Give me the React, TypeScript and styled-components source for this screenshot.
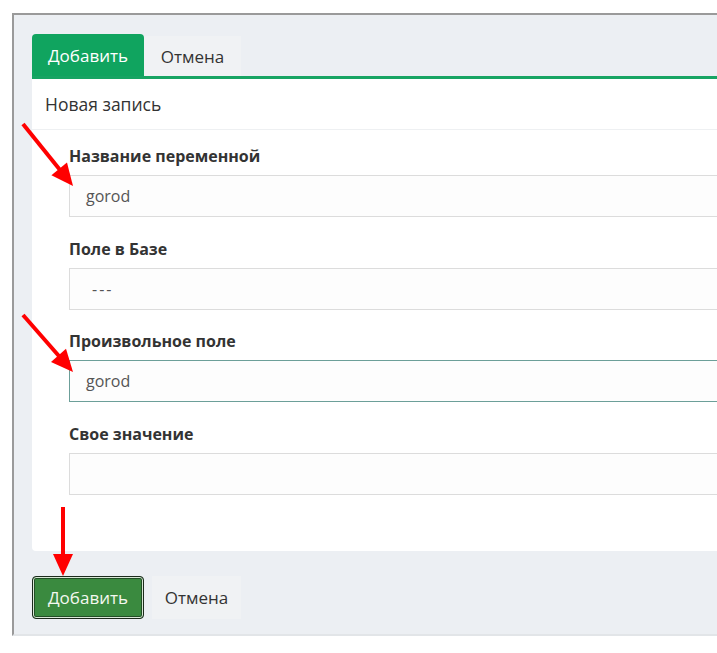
import React from "react";
import styled, { createGlobalStyle, css } from "styled-components";

const GlobalStyle = createGlobalStyle`
    html, body {
        margin: 0;
        padding: 0;
        background: #ffffff;
        overflow: hidden;
    }

    body {
        font-family: "Open Sans", "Noto Sans", Arial, sans-serif;
        color: #333;
    }

    * {
        box-sizing: border-box;
    }
`;

const Page = styled.div`
    position: relative;
    width: 717px;
    height: 653px;
    padding: 13px 0 0 12px;
`;

const Frame = styled.div`
    width: 800px;
    background-color: #eceff3;
    border-top: 2px solid #9a9a9a;
    border-left: 2px solid #9a9a9a;
    border-bottom: 2px solid #e2e5e8;
    padding: 19px 0 15px 18px;
`;

const TabBar = styled.div`
    display: flex;
    align-items: flex-end;
`;

const Tab = styled.button<{ $active?: boolean }>`
    font-family: inherit;
    font-size: 17px;
    border: none;
    cursor: pointer;
    padding: 0;
    ${({ $active }) =>
        $active
            ? css`
                  width: 112px;
                  height: 42px;
                  background-color: #10a45f;
                  color: #fff;
                  border-radius: 4px 4px 0 0;
              `
            : css`
                  width: 97px;
                  height: 40px;
                  background-color: #f0f2f4;
                  color: #333;
              `}
`;

const Card = styled.div`
    background-color: #fff;
    border-top: 3px solid #17a463;
    border-radius: 0 0 0 4px;
`;

const CardHeader = styled.div`
    height: 51px;
    display: flex;
    align-items: center;
    padding-left: 13px;
    font-size: 17.5px;
    color: #333;
    border-bottom: 1px solid #eef0f2;
`;

const CardBody = styled.div`
    display: flex;
    flex-direction: column;
    gap: 20.5px;
    padding: 15px 0 56px 37px;
`;

const Field = styled.div`
    display: flex;
    flex-direction: column;
`;

const Label = styled.label`
    font-size: 16px;
    font-weight: 700;
    line-height: 22px;
    color: #333;
    margin-bottom: 8px;
`;

const Input = styled.div<{ $focused?: boolean; $indent?: number; $spread?: boolean }>`
    height: 42px;
    display: flex;
    align-items: center;
    padding-left: ${({ $indent }) => $indent ?? 16}px;
    background-color: #fdfdfd;
    border: 1px solid ${({ $focused }) => ($focused ? "#6c9f99" : "#dcdcdc")};
    font-size: 16px;
    color: #555;
    letter-spacing: ${({ $spread }) => ($spread ? "2px" : "normal")};
`;

const Footer = styled.div`
    display: flex;
    gap: 8px;
    margin-top: 25px;
`;

const Button = styled.button<{ $primary?: boolean }>`
    font-family: inherit;
    font-size: 17px;
    height: 43px;
    padding: 0;
    cursor: pointer;
    ${({ $primary }) =>
        $primary
            ? css`
                  width: 112px;
                  background-color: #3a8a3f;
                  color: #f4f8f0;
                  border: 1px solid #1b2a1c;
                  border-radius: 4px;
                  box-shadow: inset 0 0 0 1px #d9e8d6, inset 0 0 0 2px #214e25;
              `
            : css`
                  width: 89px;
                  background-color: #f0f2f4;
                  color: #333;
                  border: none;
              `}
`;

const Arrows = styled.svg`
    position: absolute;
    left: 0;
    top: 0;
    pointer-events: none;
`;

const Arrow = ({ x1, y1, x2, y2 }: { x1: number; y1: number; x2: number; y2: number }) => {
    const dx = x2 - x1;
    const dy = y2 - y1;
    const len = Math.hypot(dx, dy);
    const ux = dx / len;
    const uy = dy / len;
    const head = 22;
    const half = 10;
    const bx = x2 - ux * head;
    const by = y2 - uy * head;
    const p1 = `${bx - uy * half},${by + ux * half}`;
    const p2 = `${bx + uy * half},${by - ux * half}`;
    return (
        <g>
            <line x1={x1} y1={y1} x2={bx + ux * 2} y2={by + uy * 2} stroke="#f00" strokeWidth={4} />
            <polygon points={`${x2},${y2} ${p1} ${p2}`} fill="#f00" />
        </g>
    );
};

export default function App() {
    return (
        <>
            <GlobalStyle />
            <Page>
                <Frame>
                    <TabBar>
                        <Tab $active>Добавить</Tab>
                        <Tab>Отмена</Tab>
                    </TabBar>
                    <Card>
                        <CardHeader>Новая запись</CardHeader>
                        <CardBody>
                            <Field>
                                <Label>Название переменной</Label>
                                <Input>gorod</Input>
                            </Field>
                            <Field>
                                <Label>Поле в Базе</Label>
                                <Input $indent={22} $spread>---</Input>
                            </Field>
                            <Field>
                                <Label>Произвольное поле</Label>
                                <Input $focused>gorod</Input>
                            </Field>
                            <Field>
                                <Label>Свое значение</Label>
                                <Input />
                            </Field>
                        </CardBody>
                    </Card>
                    <Footer>
                        <Button $primary>Добавить</Button>
                        <Button>Отмена</Button>
                    </Footer>
                </Frame>
                <Arrows width={717} height={653}>
                    <Arrow x1={23} y1={124} x2={73} y2={186} />
                    <Arrow x1={23} y1={315} x2={73} y2={372} />
                    <Arrow x1={63} y1={507} x2={63} y2={576} />
                </Arrows>
            </Page>
        </>
    );
}
